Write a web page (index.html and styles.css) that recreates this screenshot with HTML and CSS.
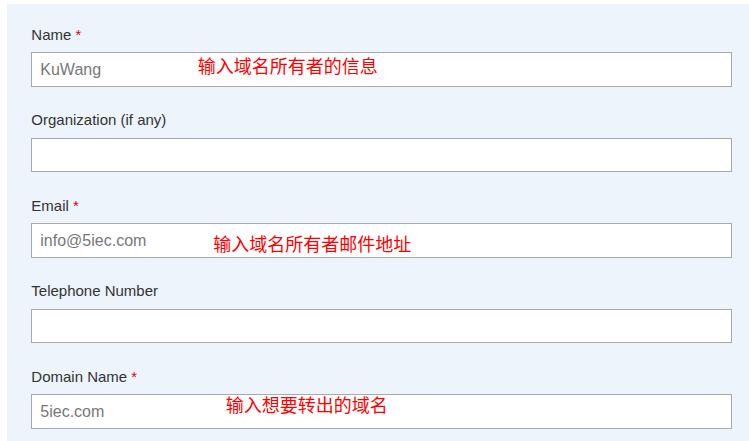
FILE: index.html
```html
<!DOCTYPE html>
<html lang="en">
<head>
<meta charset="utf-8">
<title>Domain transfer form</title>
<link rel="stylesheet" href="styles.css">
</head>
<body>
<form class="panel">
  <div class="group">
    <label class="label">Name <span class="req">*</span></label>
    <div class="field">
      <input class="input" type="text" placeholder="KuWang">
      <span class="note note-name">输入域名所有者的信息</span>
    </div>
  </div>
  <div class="group">
    <label class="label">Organization (if any)</label>
    <div class="field">
      <input class="input" type="text">
    </div>
  </div>
  <div class="group">
    <label class="label">Email <span class="req">*</span></label>
    <div class="field">
      <input class="input" type="text" placeholder="info@5iec.com">
      <span class="note note-email">输入域名所有者邮件地址</span>
    </div>
  </div>
  <div class="group">
    <label class="label">Telephone Number</label>
    <div class="field">
      <input class="input" type="text">
    </div>
  </div>
  <div class="group">
    <label class="label">Domain Name <span class="req">*</span></label>
    <div class="field">
      <input class="input" type="text" placeholder="5iec.com">
      <span class="note note-domain">输入想要转出的域名</span>
    </div>
  </div>
</form>
</body>
</html>
```
FILE: styles.css
```css
html, body {
  margin: 0;
  padding: 0;
  background: #ffffff;
  overflow: hidden;
}

body {
  font-family: "Liberation Sans", Arial, "Noto Sans CJK SC", sans-serif;
}

.panel {
  box-sizing: border-box;
  margin: 4px 0 0 7px;
  width: 742px;
  height: 436.6px;
  padding: 20.8px 16.7px 0 24.3px;
  background: #edf4fc;
  display: flex;
  flex-direction: column;
}

.group {
  display: flex;
  flex-direction: column;
  margin-bottom: 23.3px;
}

.label {
  display: block;
  font-size: 15px;
  line-height: 20px;
  color: #333333;
  margin-bottom: 7.4px;
}

.req {
  color: #e00000;
}

.field {
  position: relative;
}

.input {
  box-sizing: border-box;
  display: block;
  width: 100%;
  height: 34.8px;
  margin: 0;
  padding: 0 8px;
  border: 1px solid #a9a9a9;
  border-radius: 0;
  background: #ffffff;
  font-family: "Liberation Sans", Arial, sans-serif;
  font-size: 16px;
  color: #333333;
  outline: none;
}

.input::placeholder {
  color: #777777;
  opacity: 1;
}

.note {
  position: absolute;
  font-family: "Noto Sans CJK SC", sans-serif;
  font-size: 18px;
  line-height: 18px;
  color: #ff0000;
  white-space: nowrap;
}

.note-name {
  left: 166.5px;
  top: 3.5px;
}

.note-email {
  left: 182px;
  top: 11px;
}

.note-domain {
  left: 194.5px;
  top: 1px;
}
```
